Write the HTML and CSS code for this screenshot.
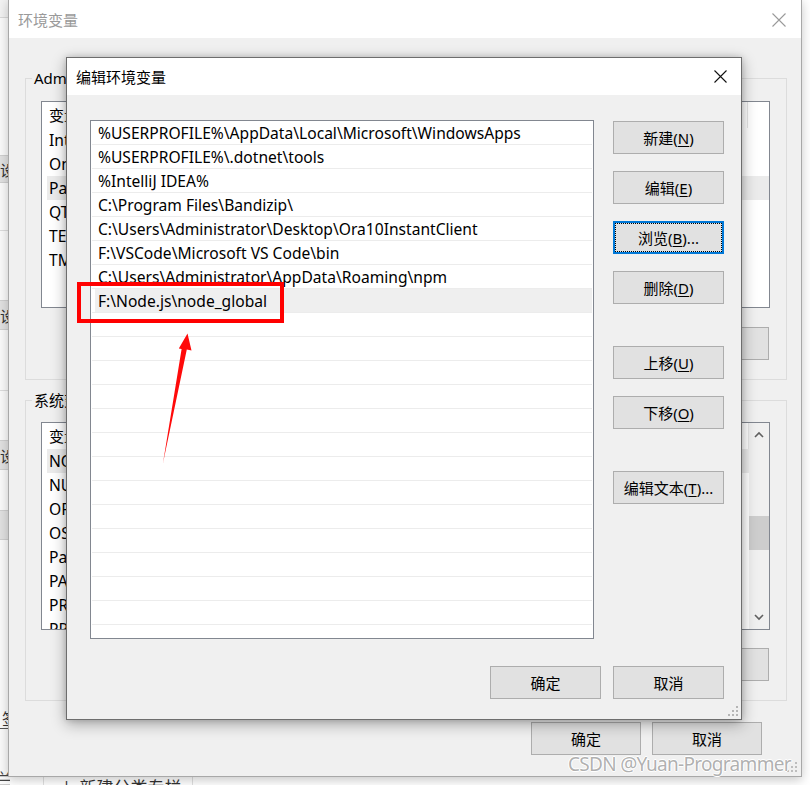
FILE: index.html
```html
<!DOCTYPE html>
<html lang="zh-CN">
<head>
<meta charset="utf-8">
<title>编辑环境变量</title>
<link rel="stylesheet" href="styles.css">
</head>
<body>
<div class="desk">
  <div class="bgpage">
    <div class="bg-strip">
      <div class="bg-top"></div>
      <div class="bg-btn s1"><span>设置</span></div>
      <div class="bg-line s2"></div>
      <div class="bg-btn s3"><span>设置</span></div>
      <div class="bg-line s4"></div>
      <div class="bg-btn s5"><span>设置</span></div>
      <div class="bg-btn s6"><span>量</span></div>
      <div class="bg-sign"><span>签</span></div>
      <div class="bg-last"><span>兰:</span></div>
    </div>
    <div class="bg-bottom">
      <div class="bg-tab">＋ 新建分类专栏</div>
    </div>
  </div>

  <section class="win outer">
    <header class="titlebar">
      <span class="title inactive">环境变量</span>
      <svg class="close" width="14" height="14" viewBox="0 0 14 14"><path d="M0.5 0.5L13.5 13.5M13.5 0.5L0.5 13.5" stroke="#9a9a9a" stroke-width="1.1"/></svg>
    </header>
    <div class="obody">
      <fieldset class="group g1">
        <legend>Administrator 的用户变量(U)</legend>
        <div class="lv lv1">
          <div class="lv-main">
            <div class="lv-head"><span class="hc1">变量</span><span class="hc2">值</span><span class="hc3"></span></div>
            <div class="lv-row">IntelliJ IDEA</div>
            <div class="lv-row">OneDrive</div>
            <div class="lv-row sel">Path</div>
            <div class="lv-row">QT_HOME</div>
            <div class="lv-row">TEMP</div>
            <div class="lv-row">TMP</div>
          </div>
        </div>
        <div class="gbtns">
          <button class="obtn">新建(N)...</button>
          <button class="obtn">编辑(E)...</button>
          <button class="obtn">删除(D)</button>
        </div>
      </fieldset>
      <fieldset class="group g2">
        <legend>系统变量(S)</legend>
        <div class="lv lv2">
          <div class="lv-main">
            <div class="lv-head"><span class="hc1">变量</span><span class="hc2">值</span></div>
            <div class="lv-row sel">NODE_PATH</div>
            <div class="lv-row">NUMBER_OF_PROCESSORS</div>
            <div class="lv-row">ORACLE_HOME</div>
            <div class="lv-row">OS</div>
            <div class="lv-row">Path</div>
            <div class="lv-row">PATHEXT</div>
            <div class="lv-row">PROCESSOR_ARCHITECTURE</div>
            <div class="lv-row">PROCESSOR_IDENTIFIER</div>
          </div>
          <div class="vscroll">
            <div class="sb-arrow"><svg width="10" height="7" viewBox="0 0 10 7"><path d="M1 6L5 2L9 6" fill="none" stroke="#606060" stroke-width="1.6"/></svg></div>
            <div class="sb-track"><div class="sb-thumb"></div></div>
            <div class="sb-arrow"><svg width="10" height="7" viewBox="0 0 10 7"><path d="M1 1L5 5L9 1" fill="none" stroke="#606060" stroke-width="1.6"/></svg></div>
          </div>
        </div>
        <div class="gbtns">
          <button class="obtn">新建(W)...</button>
          <button class="obtn">编辑(I)...</button>
          <button class="obtn">删除(L)</button>
        </div>
      </fieldset>
      <div class="obottom">
        <button class="obtn">确定</button>
        <button class="obtn">取消</button>
      </div>
    </div>
    <svg class="grip ogrip" width="11" height="11" viewBox="0 0 11 11"><g fill="#bdbdbd"><rect x="8" y="0" width="2" height="2"/><rect x="4" y="4" width="2" height="2"/><rect x="8" y="4" width="2" height="2"/><rect x="0" y="8" width="2" height="2"/><rect x="4" y="8" width="2" height="2"/><rect x="8" y="8" width="2" height="2"/></g></svg>
  </section>

  <section class="win dlg">
    <header class="titlebar dtitle">
      <span class="title">编辑环境变量</span>
      <svg class="close" width="13" height="13" viewBox="0 0 13 13"><path d="M0.5 0.5L12.5 12.5M12.5 0.5L0.5 12.5" stroke="#111" stroke-width="1.1"/></svg>
    </header>
    <div class="dbody">
      <div class="plist">
        <div class="prow">%USERPROFILE%\AppData\Local\Microsoft\WindowsApps</div>
        <div class="prow">%USERPROFILE%\.dotnet\tools</div>
        <div class="prow">%IntelliJ IDEA%</div>
        <div class="prow">C:\Program Files\Bandizip\</div>
        <div class="prow">C:\Users\Administrator\Desktop\Ora10InstantClient</div>
        <div class="prow">F:\VSCode\Microsoft VS Code\bin</div>
        <div class="prow">C:\Users\Administrator\AppData\Roaming\npm</div>
        <div class="prow sel">F:\Node.js\node_global</div>
        <div class="prow"></div>
        <div class="prow"></div>
        <div class="prow"></div>
        <div class="prow"></div>
        <div class="prow"></div>
        <div class="prow"></div>
        <div class="prow"></div>
        <div class="prow"></div>
        <div class="prow"></div>
        <div class="prow"></div>
        <div class="prow"></div>
        <div class="prow"></div>
        <div class="prow"></div>
        <div class="prow"></div>
      </div>
      <div class="pbtns">
        <button class="btn">新建(<u>N</u>)</button>
        <button class="btn">编辑(<u>E</u>)</button>
        <button class="btn focus">浏览(<u>B</u>)...</button>
        <button class="btn">删除(<u>D</u>)</button>
        <button class="btn gap">上移(<u>U</u>)</button>
        <button class="btn">下移(<u>O</u>)</button>
        <button class="btn gap">编辑文本(<u>T</u>)...</button>
      </div>
      <div class="dfoot">
        <button class="btn">确定</button>
        <button class="btn">取消</button>
      </div>
    </div>
    <svg class="grip dgrip" width="11" height="11" viewBox="0 0 11 11"><g fill="#b5b5b5"><rect x="8" y="0" width="2" height="2"/><rect x="4" y="4" width="2" height="2"/><rect x="8" y="4" width="2" height="2"/><rect x="0" y="8" width="2" height="2"/><rect x="4" y="8" width="2" height="2"/><rect x="8" y="8" width="2" height="2"/></g></svg>
  </section>

  <div class="mark-box"></div>
  <svg class="mark-arrow" width="810" height="785" viewBox="0 0 810 785">
    <polygon points="187.5,333.5 191.5,350.5 186.8,349.6 163,463 181.6,349 178.8,348.6" fill="#ff0a0a"/>
  </svg>

  <div class="watermark">CSDN @Yuan-Programmer</div>
</div>
</body>
</html>
```

FILE: styles.css
```css
* { box-sizing: border-box; }
html, body { margin: 0; padding: 0; }
body {
  width: 810px;
  height: 785px;
  overflow: hidden;
  background: #ffffff;
  font-family: "Noto Sans", "Noto Sans CJK SC", sans-serif;
  font-size: 15px;
  color: #000;
}
.desk { position: relative; width: 810px; height: 785px; overflow: hidden; }

/* background page peeking out */
.bgpage { position: absolute; inset: 0; }
.bg-strip {
  position: absolute; left: 0; top: 0; width: 10px; height: 785px;
  display: flex; flex-direction: column; background: #fafafa; overflow: hidden;
}
.bg-top { height: 18px; background: #f2f2f2; border-bottom: 1px solid #d8d8d8; flex: none; }
.bg-btn {
  height: 28px; background: #e1e1e1; border-top: 1px solid #cfcfcf; border-bottom: 1px solid #cfcfcf;
  display: flex; justify-content: flex-end; align-items: center; overflow: hidden; flex: none;
  font-size: 15px; color: #333; white-space: nowrap;
}
.bg-btn span { margin-right: -20px; }
.s1 { margin-top: 137px; }
.bg-line { height: 1px; background: #dcdcdc; flex: none; }
.s2 { margin-top: 47px; }
.s3 { margin-top: 69px; height: 30px; }
.s4 { margin-top: 60px; }
.s5 { margin-top: 49px; height: 30px; }
.s6 { margin-top: 40px; height: 30px; }
.bg-sign { margin-top: 171px; height: 18px; display: flex; justify-content: flex-end; overflow: hidden; flex: none; font-size: 16px; color: #333; border-bottom: 1px solid #555; }
.bg-sign span { margin-right: -8px; line-height: 16px; }
.bg-last { margin-top: 41px; font-size: 16px; color: #444; white-space: nowrap; line-height: 18px; }
.bg-last span { margin-left: -3px; }
.bg-bottom { position: absolute; left: 0; top: 776px; width: 810px; height: 9px; overflow: hidden; }
.bg-tab {
  margin-left: 43px; width: 150px; height: 30px; border-left: 1px solid #e0e0e0; border-right: 1px solid #e0e0e0;
  padding: 1px 0 0 14px; font-size: 17px; line-height: 22px; color: #333; white-space: nowrap;
}

/* windows */
.win { position: absolute; background: #f0f0f0; display: flex; flex-direction: column; }
.titlebar { background: #fff; display: flex; align-items: center; justify-content: space-between; flex: none; }
.title { font-size: 15px; }
.inactive { color: #9a9a9a; }
.grip { position: absolute; }

.outer {
  left: 8px; top: -1px; width: 794px; height: 778px;
  border: 1px solid #a8a8a8;
  box-shadow: 0 3px 10px rgba(0,0,0,0.22);
}
.outer .titlebar { height: 38px; padding: 1px 15px 0 9px; }
.obody { flex: 1; display: flex; flex-direction: column; padding: 0 14px 0 16px; }
.group {
  margin: 0; border: 1px solid #dcdcdc; padding: 13px 16px 19px 6px; min-width: 0;
}
.group legend { padding: 0 2px; font-size: 15px; line-height: 20px; white-space: nowrap; }
.g1 { margin-top: 30px; }
.g2 { margin-top: 10px; padding-top: 12px; }
.lv {
  margin-left: 9px; background: #fff; border: 1px solid #828790; display: flex; overflow: hidden;
}
.lv1 { height: 207px; }
.lv2 { height: 208px; }
.lv-main { flex: 1; min-width: 0; }
.lv-head { height: 26px; display: flex; align-items: center; font-size: 15px; }
.lv-head .hc1 { width: 240px; padding-left: 7px; border-right: 1px solid #e5e5e5; height: 26px; line-height: 26px; }
.lv-head .hc2 { flex: 1; padding-left: 7px; border-right: 1px solid #e5e5e5; height: 26px; line-height: 26px; }
.lv-head .hc3 { width: 21px; }
.lv-row { height: 24px; line-height: 24px; padding-left: 7px; white-space: nowrap; font-size: 15.6px; }
.lv-row.sel { background: linear-gradient(to right, #fff 5px, #ebebeb 5px); }
.vscroll { width: 20px; flex: none; display: flex; flex-direction: column; background: #f0f0f0; }
.sb-arrow { height: 23px; display: flex; align-items: center; justify-content: center; flex: none; }
.sb-track { flex: 1; }
.sb-thumb { margin-top: 70px; height: 34px; background: #cdcdcd; }
.gbtns { margin-left: 9px; display: flex; justify-content: flex-end; gap: 12px; margin-top: 18px; margin-right: 1px; }
.g1 .gbtns { margin-top: 19px; }
.obtn {
  width: 110px; height: 33px; background: #e1e1e1; border: 1px solid #adadad; font-family: inherit; font-size: 15px;
  color: #000; padding: 0;
}
.obottom { display: flex; justify-content: flex-end; gap: 11px; margin-top: 21px; margin-right: 25px; }
.obottom .obtn { height: 33px; }
.ogrip { right: 3px; bottom: 3px; }

/* edit dialog */
.dlg {
  left: 66px; top: 57px; width: 676px; height: 663px;
  border: 1px solid #6d6d6d;
  box-shadow: 0 4px 14px rgba(0,0,0,0.32), 0 0 6px rgba(0,0,0,0.15);
}
.dtitle { height: 37px; padding: 0 14px 0 9px; }
.dbody {
  flex: 1; display: grid; grid-template-columns: 504px 111px; grid-template-rows: 519px auto;
  column-gap: 19px; row-gap: 27px; padding: 25px 17px 0 23px;
}
.plist { background: #fff; border: 1px solid #828790; overflow: hidden; }
.prow {
  height: 24px; margin: 0 1px; border-bottom: 1px solid #ececec; padding: 1px 0 0 6px;
  line-height: 23px; white-space: nowrap; font-size: 15.6px;
}
.prow.sel { background: linear-gradient(to right, #fff 3px, #efefef 3px); }
.pbtns { display: flex; flex-direction: column; gap: 17px; padding-top: 1px; }
.btn {
  width: 111px; height: 33px; flex: none; background: #e1e1e1; border: 1px solid #adadad; padding: 0;
  font-family: inherit; font-size: 15px; color: #000;
}
.btn u { text-decoration-thickness: 1px; text-underline-offset: 2px; }
.btn.gap { margin-top: 25px; }
.btn.focus { border: 2px solid #0078d7; outline: 1px dotted #000; outline-offset: -3px; }
.dfoot { grid-column: 1 / 3; display: flex; justify-content: flex-end; gap: 12px; }
.dgrip { right: 2px; bottom: 2px; }

/* annotations */
.mark-box { position: absolute; left: 77px; top: 282px; width: 207px; height: 41px; border: 4px solid #ff0000; }
.mark-arrow { position: absolute; left: 0; top: 0; }
.watermark {
  position: absolute; left: 568px; top: 752px; font-size: 19px; line-height: 24px; white-space: nowrap;
  letter-spacing: -0.7px;
  color: rgba(150,150,150,0.75); font-family: "Noto Sans", sans-serif;
  text-shadow: 1px 0 #fff, -1px 0 #fff, 0 1px #fff, 0 -1px #fff;
}
```
